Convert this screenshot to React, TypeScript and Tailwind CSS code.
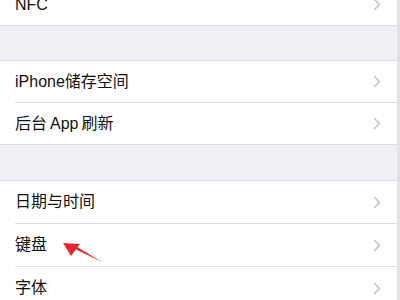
import * as React from "react";

const font = { fontFamily: '"Liberation Sans", "Noto Sans CJK SC", sans-serif' };

function Chevron() {
  return (
    <svg width="8" height="13" viewBox="0 0 8 13" fill="none">
      <path d="M1.5 1.5 L6.5 6.5 L1.5 11.5" stroke="#c4c4c8" strokeWidth="1.6" strokeLinecap="round" strokeLinejoin="round" />
    </svg>
  );
}

function Row({ label, last, tall }: { label: React.ReactNode; last?: boolean; tall?: boolean }) {
  return (
    <>
      <div className={`flex items-center justify-between pl-[15px] pr-[19px] bg-white ${tall ? "h-[42px]" : "h-[41px]"}`}>
        <span className="text-[16px] text-[#111] leading-none">{label}</span>
        <Chevron />
      </div>
      {!last && (
        <div className="bg-white pl-[15px]">
          <div className="h-px bg-[#dddde0]" />
        </div>
      )}
    </>
  );
}

function Group({ items, tall }: { items: React.ReactNode[]; tall?: boolean }) {
  return (
    <div className="border-y border-[#dddde0]">
      {items.map((t, i) => (
        <Row key={i} label={t} tall={tall} last={i === items.length - 1} />
      ))}
    </div>
  );
}

export default function App() {
  return (
    <div className="relative w-[400px] h-[300px] overflow-hidden bg-[#f0eff5]" style={font}>
      <div className="mt-[-17px]">
        <Group items={["NFC"]} />
        <div className="h-[34px]" />
        <Group
          items={[
            "iPhone储存空间",
            <>
              后台<span className="px-[3px]">App</span>刷新
            </>,
          ]}
        />
        <div className="h-[35px]" />
        <Group tall items={["日期与时间", "键盘", "字体"]} />
      </div>
      <div className="absolute top-0 right-0 h-full w-[3px] bg-[#e2e2e4]" />
      <svg className="absolute left-0 top-0" width="400" height="300" viewBox="0 0 400 300">
        <path d="M102 262 L74 248.5 L75.5 246 Z" fill="#e5262b" />
        <path d="M63 243 L80 244 L71 256 Z" fill="#e5262b" />
      </svg>
    </div>
  );
}
